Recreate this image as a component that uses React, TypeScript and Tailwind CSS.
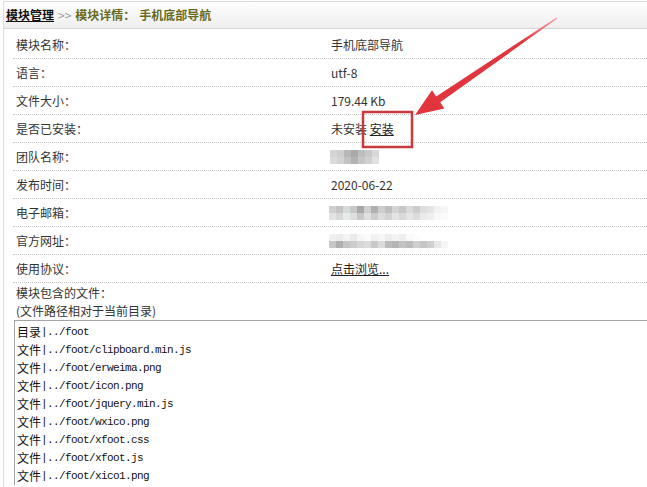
import React from "react";

const rows = [
  { label: "模块名称：", value: "手机底部导航" },
  { label: "语言：", value: "utf-8" },
  { label: "文件大小：", value: "179.44 Kb" },
  { label: "是否已安装：", value: "install" },
  { label: "团队名称：", value: "mosaic-team" },
  { label: "发布时间：", value: "2020-06-22" },
  { label: "电子邮箱：", value: "mosaic-mail" },
  { label: "官方网址：", value: "mosaic-site" },
  { label: "使用协议：", value: "license" },
];

const files = [
  ["目录", "../foot"],
  ["文件", "../foot/clipboard.min.js"],
  ["文件", "../foot/erweima.png"],
  ["文件", "../foot/icon.png"],
  ["文件", "../foot/jquery.min.js"],
  ["文件", "../foot/wxico.png"],
  ["文件", "../foot/xfoot.css"],
  ["文件", "../foot/xfoot.js"],
  ["文件", "../foot/xico1.png"],
];

// pixelated blur blocks, one string of grays per row
const mosaics: Record<string, string[][]> = {
  "mosaic-team": [
    ["#d4d4d4", "#cfcfcf", "#b8b8b8", "#a9a9a9", "#bdbdbd", "#c9c9c9", "#d8d8d8"],
    ["#dcdcdc", "#d3d3d3", "#c2c2c2", "#b2b2b2", "#c6c6c6", "#d0d0d0", "#e2e2e2"],
  ],
  "mosaic-mail": [
    ["#d0d0d0", "#c4c4c4", "#d6dcdc", "#c8c8c8", "#a8a8a8", "#cfcfcf", "#b0b0b0", "#cdcdcd", "#bdbdbd", "#d4d4d4", "#c7c7c7", "#dadada", "#cccccc", "#dedede", "#e4e4e4", "#f2f2f2", "#f6f6f6", "#ffffff"],
    ["#e2e2e2", "#d8d8d8", "#e6ecec", "#dedede", "#c8c8c8", "#dfdfdf", "#cdcdcd", "#dcdcdc", "#d3d3d3", "#e3e3e3", "#d9d9d9", "#e5e5e5", "#dcdcdc", "#ebebeb", "#efefef", "#f8f8f8", "#fbfbfb", "#ffffff"],
  ],
  "mosaic-site": [
    ["#f0f0f0", "#ececec", "#f4f4f4", "#eaeaea", "#f7f7f7", "#fbfbfb", "#f1f1f1", "#f6f6f6", "#ededed", "#f4f4f4", "#eeeeee", "#f9f9f9", "#fcfcfc", "#ffffff", "#ffffff", "#ffffff", "#ffffff", "#ffffff", "#ffffff", "#ffffff", "#ffffff"],
    ["#c8c8c8", "#b0b0b0", "#c6c6c6", "#cdcdcd", "#d6d6d6", "#dcdcdc", "#c9c9c9", "#dcdcdc", "#bcbcbc", "#b4b4b4", "#c3c3c3", "#bcbcbc", "#cfcfcf", "#c6c6c6", "#d0d0d0", "#e7e7e7", "#f5f5f5", "#ffffff", "#ffffff", "#ffffff", "#ffffff"],
  ],
};

function Mosaic({ name }: { name: string }) {
  const grid = mosaics[name];
  return (
    <div className="flex flex-col">
      {grid.map((line, i) => (
        <div key={i} className="flex">
          {line.map((c, j) => (
            <span key={j} className="block w-[7px] h-[7px]" style={{ backgroundColor: c }} />
          ))}
        </div>
      ))}
    </div>
  );
}

function Value({ value }: { value: string }) {
  if (value === "install") {
    return (
      <span>
        未安装 <span className="underline text-[#222]">安装</span>
      </span>
    );
  }
  if (value === "license") {
    return <span className="underline text-[#222]">点击浏览...</span>;
  }
  if (value === "mosaic-team") {
    return (
      <div className="-ml-px">
        <Mosaic name={value} />
      </div>
    );
  }
  if (value.startsWith("mosaic")) {
    return (
      <div className="-ml-[2px]">
        <Mosaic name={value} />
      </div>
    );
  }
  return <span>{value}</span>;
}

export default function App() {
  return (
    <div className="relative w-[647px] h-[487px] overflow-hidden bg-white text-[12px] text-[#333] font-['Noto_Sans_CJK_SC','Noto_Sans',sans-serif]">
      <div className="ml-[3px] h-full border-l border-[#dcdcdc]">
        {/* breadcrumb bar */}
        <div className="mt-px h-[28px] flex items-center pl-[2px] border-t border-b border-[#d6d6d6] bg-gradient-to-b from-[#ffffff] to-[#eeeeee]">
          <span className="font-bold underline text-[#111] text-[12px]">模块管理</span>
          <span className="ml-[4px] text-[#999]">&gt;&gt;</span>
          <span className="ml-[4px] font-bold text-[#6a6a1c]">模块详情：</span>
          <span className="ml-[4px] font-bold text-[#6a6a1c]">手机底部导航</span>
        </div>

        <div className="pl-[9px] pt-[2px]">
          {rows.map((r) => (
            <div
              key={r.label}
              className="h-[28px] flex items-center border-b border-dotted border-[#c4c4c4]"
            >
              <div className="w-[318px] pl-[3px] shrink-0">{r.label}</div>
              <Value value={r.value} />
            </div>
          ))}
          <div className="pl-[3px] leading-[18px] pt-px">
            <div>模块包含的文件：</div>
            <div>(文件路径相对于当前目录)</div>
          </div>
          <div className="ml-px border-t border-l border-[#a3a3a3] pt-[2px] pl-[2px] text-[#111]">
            {files.map(([kind, path], i) => (
              <div key={i} className="h-[18px] flex items-center whitespace-nowrap">
                <span className="text-[12px]">{kind}</span>
                <span className="font-['Liberation_Mono',monospace] text-[11px] tracking-[-0.6px]">
                  |{path}
                </span>
              </div>
            ))}
          </div>
        </div>
      </div>

      {/* annotation overlay */}
      <svg className="absolute inset-0 pointer-events-none" width="647" height="487">
        <defs>
          <linearGradient id="arrowFade" x1="415" y1="115" x2="557" y2="18" gradientUnits="userSpaceOnUse">
            <stop offset="0" stopColor="#e2343c" />
            <stop offset="0.75" stopColor="#e2343c" />
            <stop offset="1" stopColor="#f0a0a8" />
          </linearGradient>
        </defs>
        <rect x="363" y="112" width="49" height="35" fill="none" stroke="#c73a3e" strokeWidth="2.5" />
        <polygon
          points="415,115 444.4,108.4 440.2,102.2 557.4,18.6 556.6,17.4 436.2,96.4 432,90.2"
          fill="url(#arrowFade)"
        />
      </svg>
    </div>
  );
}
